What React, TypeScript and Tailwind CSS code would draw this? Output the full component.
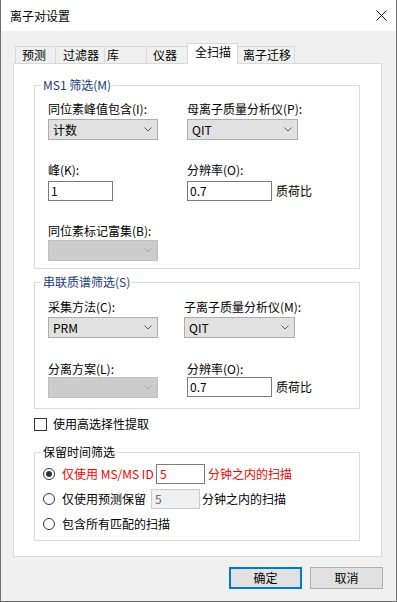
// ---------------------------------------------------------------------------
// Small controls
// ---------------------------------------------------------------------------

function Chevron({ disabled }: { disabled?: boolean }) {
  return (
    <svg width="8" height="5" viewBox="0 0 8 5" className="shrink-0">
      <polyline
        points="0.5,0.5 4,4 7.5,0.5"
        fill="none"
        stroke={disabled ? '#a6a6a6' : '#606060'}
        strokeWidth="1"
      />
    </svg>
  );
}

function Combo({ value, className, disabled }: { value?: string; className: string; disabled?: boolean }) {
  return (
    <div
      className={`flex h-[21px] items-center justify-between border pl-[4px] pr-[5px] ${className} ${
        disabled ? 'border-[#bfbfbf] bg-[#cccccc]' : 'border-[#adadad] bg-[#e1e1e1]'
      }`}
    >
      <span>{value}</span>
      <Chevron disabled={disabled} />
    </div>
  );
}

function TextBox({ value, className }: { value: string; className: string }) {
  return (
    <div className={`flex h-[20px] items-center border border-[#7a7a7a] bg-white pl-[2px] ${className}`}>
      {value}
    </div>
  );
}

function Label({ text }: { text: string }) {
  return <div className="h-[16px] whitespace-nowrap">{text}</div>;
}

function Radio({ checked }: { checked?: boolean }) {
  return (
    <div className="flex h-[12px] w-[12px] shrink-0 items-center justify-center rounded-full border border-[#333333] bg-white">
      {checked && <div className="h-[6px] w-[6px] rounded-full bg-[#333333]" />}
    </div>
  );
}

function Tab({ label, className, selected }: { label: string; className: string; selected?: boolean }) {
  if (selected) {
    return (
      <div
        className={`relative z-10 -mx-[2px] -mb-px h-[21px] border-x border-t border-[#d9d9d9] bg-white ${className}`}
      >
        {label}
      </div>
    );
  }
  return (
    <div className={`h-[17px] border-l border-t border-[#d9d9d9] bg-[#f0f0f0] ${className}`}>{label}</div>
  );
}

function GroupBox({
  title,
  titleClass,
  className,
  children,
}: {
  title: string;
  titleClass: string;
  className: string;
  children: React.ReactNode;
}) {
  return (
    <div className={`relative w-[326px] border border-[#dcdcdc] ${className}`}>
      <span className={`absolute -top-[9px] left-[6px] bg-white px-[2px] ${titleClass}`}>{title}</span>
      {children}
    </div>
  );
}

// ---------------------------------------------------------------------------
// Dialog
// ---------------------------------------------------------------------------

export default function App() {
  return (
    <div className="flex h-[602px] w-[397px] flex-col border-x border-b border-[#707070] bg-[#f0f0f0] font-['Noto_Sans_CJK_SC',sans-serif] text-[12px] leading-[16px] text-black">
      {/* Title bar */}
      <div className="flex h-[31px] shrink-0 items-center justify-between bg-white pl-[9px] pr-[9px]">
        <span>离子对设置</span>
        <svg width="11" height="11" viewBox="0 0 11 11">
          <path d="M0.5 0.5 L10.5 10.5 M10.5 0.5 L0.5 10.5" stroke="#111111" strokeWidth="1" />
        </svg>
      </div>

      {/* Tabs */}
      <div className="mt-[12px] flex h-[20px] items-end pl-[14px]">
        <Tab label="预测" className="w-[40px] pl-[6px]" />
        <Tab label="过滤器" className="w-[49px] pl-[7px]" />
        <Tab label="库" className="w-[42px] pl-[2px]" />
        <Tab label="仪器" className="w-[43px] pl-[6px]" />
        <Tab label="全扫描" className="w-[51px] pl-[7px]" selected />
        <Tab label="离子迁移" className="w-[59px] border-r pl-[6px]" />
      </div>

      {/* Tab page */}
      <div className="ml-[12px] h-[494px] w-[369px] shrink-0 border border-[#d9d9d9] bg-white pl-[20px] pt-[21px]">
        <GroupBox title="MS1 筛选(M)" titleClass="text-[#1a3a80]" className="h-[184px] pl-[13px] pt-[15px]">
          <div className="flex">
            <div className="w-[139px]">
              <Label text="同位素峰值包含(I):" />
              <Combo value="计数" className="mt-[2px] w-[110px]" />
            </div>
            <div>
              <Label text="母离子质量分析仪(P):" />
              <Combo value="QIT" className="mt-[2px] w-[111px]" />
            </div>
          </div>
          <div className="mt-[22px] flex">
            <div className="w-[139px]">
              <Label text="峰(K):" />
              <TextBox value="1" className="mt-[3px] w-[65px]" />
            </div>
            <div>
              <Label text="分辨率(O):" />
              <div className="mt-[3px] flex items-center">
                <TextBox value="0.7" className="w-[85px]" />
                <span className="ml-[4px]">质荷比</span>
              </div>
            </div>
          </div>
          <div className="mt-[22px]">
            <Label text="同位素标记富集(B):" />
            <Combo className="mt-[1px] w-[110px]" disabled />
          </div>
        </GroupBox>

        <GroupBox title="串联质谱筛选(S)" titleClass="text-[#1a3a80]" className="mt-[13px] h-[127px] pl-[13px] pt-[16px]">
          <div className="flex">
            <div className="w-[136px]">
              <Label text="采集方法(C):" />
              <Combo value="PRM" className="mt-[2px] w-[110px]" />
            </div>
            <div>
              <Label text="子离子质量分析仪(M):" />
              <Combo value="QIT" className="mt-[2px] w-[111px]" />
            </div>
          </div>
          <div className="mt-[23px] flex">
            <div className="w-[139px]">
              <Label text="分离方案(L):" />
              <Combo className="w-[110px]" disabled />
            </div>
            <div>
              <Label text="分辨率(O):" />
              <div className="flex items-center">
                <TextBox value="0.7" className="w-[85px]" />
                <span className="ml-[4px]">质荷比</span>
              </div>
            </div>
          </div>
        </GroupBox>

        <div className="mt-[8px] flex h-[14px] items-center leading-[14px]">
          <div className="h-[13px] w-[13px] border border-[#333333] bg-white" />
          <span className="ml-[6px]">使用高选择性提取</span>
        </div>

        <GroupBox title="保留时间筛选" titleClass="text-black" className="mt-[21px] h-[89px] pl-[8px] pt-[11px]">
          <div className="flex h-[20px] items-center">
            <Radio checked />
            <span className="ml-[7px] w-[90px] whitespace-nowrap text-[#ff0000]">仅使用 MS/MS ID</span>
            <div className="ml-[4px] flex h-[20px] w-[49px] items-center border border-[#7a7a7a] bg-white pl-[3px] text-[#ff0000]">
              5
            </div>
            <span className="ml-[3px] text-[#ff0000]">分钟之内的扫描</span>
          </div>
          <div className="mt-[5px] flex h-[20px] items-center">
            <Radio />
            <span className="ml-[7px] w-[89px] whitespace-nowrap">仅使用预测保留</span>
            <div className="flex h-[20px] w-[49px] items-center border border-[#cccccc] bg-[#f0f0f0] pl-[3px] text-[#6d6d6d]">
              5
            </div>
            <span className="ml-[2px]">分钟之内的扫描</span>
          </div>
          <div className="mt-[5px] flex h-[20px] items-center">
            <Radio />
            <span className="ml-[7px]">包含所有匹配的扫描</span>
          </div>
        </GroupBox>
      </div>

      {/* Buttons */}
      <div className="mt-[10px] flex justify-end gap-[8px] pr-[13px]">
        <button className="flex h-[22px] w-[73px] items-center justify-center border-2 border-[#0078d7] bg-[#e1e1e1]">
          确定
        </button>
        <button className="flex h-[22px] w-[73px] items-center justify-center border border-[#adadad] bg-[#e1e1e1]">
          取消
        </button>
      </div>
    </div>
  );
}
